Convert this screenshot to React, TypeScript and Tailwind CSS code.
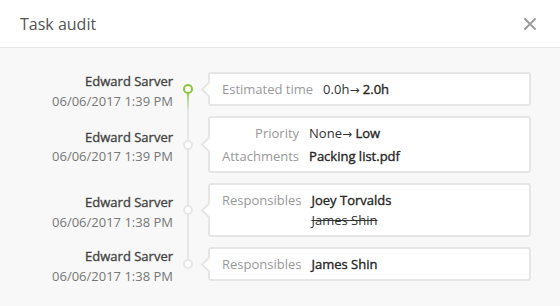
import React from 'react';

type Row = { label: string; value: React.ReactNode };

const Arrow = () => <span className="font-['DejaVu_Sans'] text-[12px] leading-none">→</span>;

const Strong = ({ children }: { children: React.ReactNode }) => (
  <span className="text-[#262626] [-webkit-text-stroke:0.35px_#262626]">{children}</span>
);

const entries: { name: string; date: string; active?: boolean; rows: Row[] }[] = [
  {
    name: 'Edward Sarver',
    date: '06/06/2017 1:39 PM',
    active: true,
    rows: [
      {
        label: 'Estimated time',
        value: (
          <>
            0.0h<Arrow /> <Strong>2.0h</Strong>
          </>
        ),
      },
    ],
  },
  {
    name: 'Edward Sarver',
    date: '06/06/2017 1:39 PM',
    rows: [
      {
        label: 'Priority',
        value: (
          <>
            None<Arrow /> <Strong>Low</Strong>
          </>
        ),
      },
      { label: 'Attachments', value: <Strong>Packing list.pdf</Strong> },
    ],
  },
  {
    name: 'Edward Sarver',
    date: '06/06/2017 1:38 PM',
    rows: [
      {
        label: 'Responsibles',
        value: (
          <div className="flex flex-col items-start">
            <Strong>Joey Torvalds</Strong>
            <span className="line-through">James Shin</span>
          </div>
        ),
      },
    ],
  },
  {
    name: 'Edward Sarver',
    date: '06/06/2017 1:38 PM',
    rows: [{ label: 'Responsibles', value: <Strong>James Shin</Strong> }],
  },
];

const App = () => {
  return (
    <div
      className="w-[560px] h-[306px] bg-[#f8f8f8] overflow-hidden"
      style={{ fontFamily: '"Open Sans", "Liberation Sans", sans-serif' }}
    >
      <div className="h-[48px] bg-white border-b border-[#e6e6e6] flex items-center justify-between pl-[20px] pr-[24px]">
        <h1 className="text-[16px] text-[#555] leading-none">Task audit</h1>
        <svg width="12" height="12" viewBox="0 0 12 12" className="text-[#999]">
          <path d="M1 1 L11 11 M11 1 L1 11" stroke="currentColor" strokeWidth="1.8" strokeLinecap="round" />
        </svg>
      </div>

      <div className="pt-[19px]">
        {entries.map((e, i) => {
          const first = i === 0;
          const last = i === entries.length - 1;
          return (
            <div key={i} className="flex items-stretch">
              <div className="w-[173px] flex flex-col justify-center items-end pt-[5px] text-[13px] leading-[19.5px]">
                <span className="text-[#444] [-webkit-text-stroke:0.35px_#444]">{e.name}</span>
                <span className="text-[#777]">{e.date}</span>
              </div>

              <div className="relative w-[30px]">
                <div
                  className={`absolute left-[14px] w-[2px] ${first ? 'top-1/2 bottom-0 bg-gradient-to-b from-[#8cc63f] to-[#e6e6e6]' : last ? 'top-0 h-1/2 bg-[#e6e6e6]' : 'top-0 bottom-0 bg-[#e6e6e6]'}`}
                />
                <div
                  className={`absolute left-[10px] top-1/2 -mt-[5px] w-[10px] h-[10px] rounded-full bg-white border-2 ${e.active ? 'border-[#8cc63f]' : 'border-[#e6e6e6]'}`}
                />
              </div>

              <div className="py-[5px] ml-[5px]">
                <div className="relative w-[323px] bg-white border-2 border-[#e6e6e6] rounded-[3px] py-[5px] pl-[12px] pr-[12px] text-[13px] leading-[20px]">
                  <div className="absolute left-[-7.5px] top-1/2 -mt-[5.5px] w-[11px] h-[11px] bg-white border-l-2 border-b-2 border-[#e6e6e6] rotate-45" />
                  <div className="relative grid grid-cols-[auto_1fr] gap-x-[10px] gap-y-[3px]">
                    {e.rows.map((r, j) => (
                      <React.Fragment key={j}>
                        <span className="text-right text-[#999]">{r.label}</span>
                        <div className="text-[#333]">{r.value}</div>
                      </React.Fragment>
                    ))}
                  </div>
                </div>
              </div>
            </div>
          );
        })}
      </div>
    </div>
  );
};

export default App;
